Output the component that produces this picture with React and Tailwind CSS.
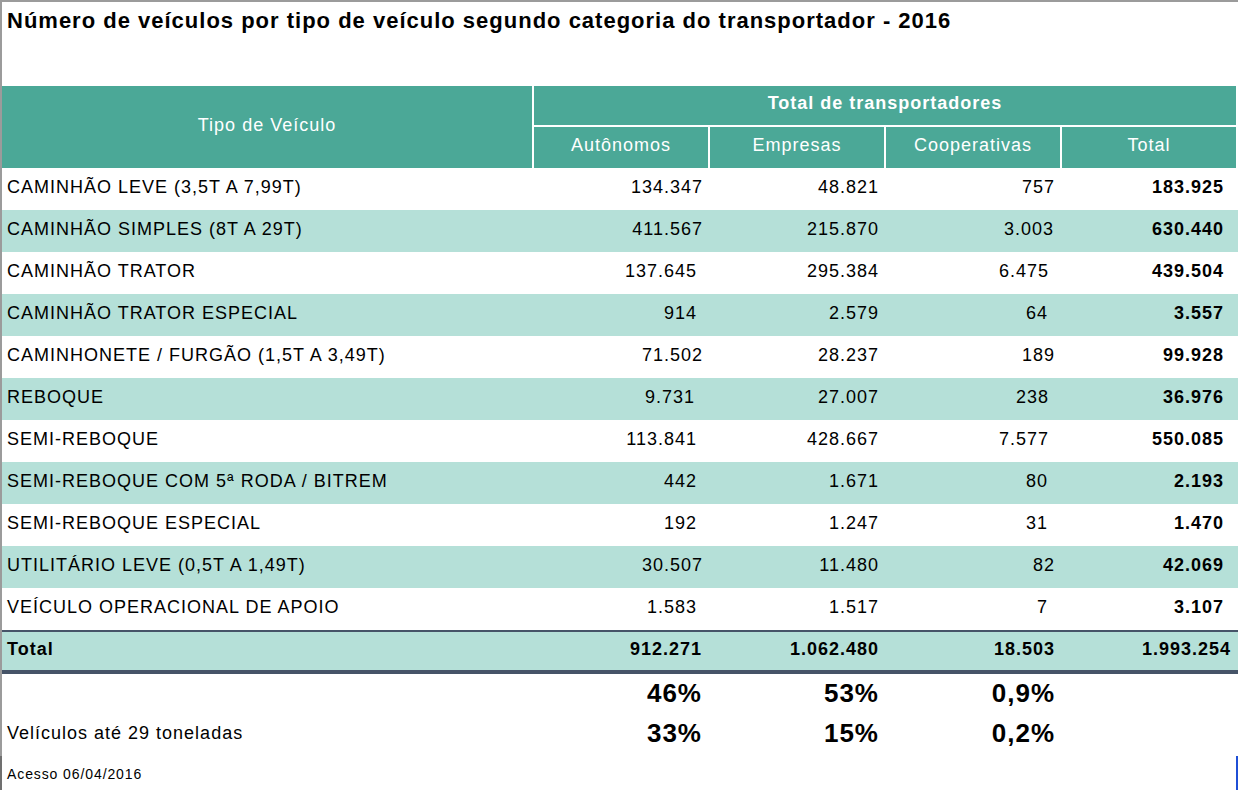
const rows = [
  ['CAMINHÃO LEVE (3,5T A 7,99T)', '134.347', '48.821', '757', '183.925', 'pr-[5px]', 'pr-[5px]'],
  ['CAMINHÃO SIMPLES (8T A 29T)', '411.567', '215.870', '3.003', '630.440', 'pr-[5px]', 'pr-[6px]'],
  ['CAMINHÃO TRATOR', '137.645', '295.384', '6.475', '439.504', 'pr-[11px]', 'pr-[11px]'],
  ['CAMINHÃO TRATOR ESPECIAL', '914', '2.579', '64', '3.557', 'pr-[11px]', 'pr-[12px]'],
  ['CAMINHONETE / FURGÃO (1,5T A 3,49T)', '71.502', '28.237', '189', '99.928', 'pr-[5px]', 'pr-[5px]'],
  ['REBOQUE', '9.731', '27.007', '238', '36.976', 'pr-[13px]', 'pr-[11px]'],
  ['SEMI-REBOQUE', '113.841', '428.667', '7.577', '550.085', 'pr-[11px]', 'pr-[11px]'],
  ['SEMI-REBOQUE COM 5ª RODA / BITREM', '442', '1.671', '80', '2.193', 'pr-[11px]', 'pr-[12px]'],
  ['SEMI-REBOQUE ESPECIAL', '192', '1.247', '31', '1.470', 'pr-[11px]', 'pr-[12px]'],
  ['UTILITÁRIO LEVE (0,5T A 1,49T)', '30.507', '11.480', '82', '42.069', 'pr-[5px]', 'pr-[5px]'],
  ['VEÍCULO OPERACIONAL DE APOIO', '1.583', '1.517', '7', '3.107', 'pr-[11px]', 'pr-[12px]'],
];

const cols = 'grid grid-cols-[530px_174px_174px_174px_174px] gap-x-[2px]';

export default function App() {
  return (
    <div className="relative w-[1238px] h-[790px] bg-white text-black border-t-2 border-[#9b9b9b] flex font-['Liberation_Sans',Arial,sans-serif] tracking-[1px] overflow-hidden">
      <div className="w-[2px] flex flex-col">
        <div className="h-[754px] bg-[#9b9b9b]" />
        <div className="flex-1 bg-[#707070]" />
      </div>

      <div className="flex-1 flex flex-col">
        <div className="h-[84px] pt-[7px] pl-[5px]">
          <h1 className="text-[22px] leading-[24px] font-bold">
            Número de veículos por tipo de veículo segundo categoria do transportador - 2016
          </h1>
        </div>

        {/* header */}
        <div className={`${cols} w-[1234px] text-white text-[18px]`}>
          <div className="row-span-3 bg-[#4ba897] flex items-center justify-center pb-[3px]">Tipo de Veículo</div>
          <div className="col-span-4 h-[39px] bg-[#4ba897] flex items-center justify-center font-bold pb-[4px]">
            Total de transportadores
          </div>
          <div className="col-span-4 h-[2px]" />
          {['Autônomos', 'Empresas', 'Cooperativas', 'Total'].map((h) => (
            <div key={h} className="h-[41px] bg-[#4ba897] flex items-center justify-center pb-[4px]">{h}</div>
          ))}
        </div>

        {/* body */}
        <div className="text-[18px]">
          {rows.map(([name, a, e, c, t, pa, pc], i) => (
            <div key={name} className={`${cols} h-[42px] ${i % 2 ? 'bg-[#b5e0d8]' : 'bg-white'}`}>
              <div className="flex items-center pl-[5px] pb-[4px]">{name}</div>
              <div className={`flex items-center justify-end pb-[4px] ${pa}`}>{a}</div>
              <div className="flex items-center justify-end pb-[4px] pr-[5px]">{e}</div>
              <div className={`flex items-center justify-end pb-[4px] ${pc}`}>{c}</div>
              <div className="flex items-center justify-end pb-[4px] pr-[12px] font-bold">{t}</div>
            </div>
          ))}
          <div className={`${cols} h-[44px] bg-[#b5e0d8] border-t-2 border-b-4 border-[#465468] font-bold`}>
            <div className="flex items-center pl-[5px] pb-[3px]">Total</div>
            <div className="flex items-center justify-end pb-[3px] pr-[6px]">912.271</div>
            <div className="flex items-center justify-end pb-[3px] pr-[5px]">1.062.480</div>
            <div className="flex items-center justify-end pb-[3px] pr-[5px]">18.503</div>
            <div className="flex items-center justify-end pb-[3px] pr-[5px]">1.993.254</div>
          </div>
        </div>

        {/* percentages */}
        <div className={`${cols} h-[36px] text-[26px] font-bold`}>
          <div />
          <div className="flex items-center justify-end pr-[6px]">46%</div>
          <div className="flex items-center justify-end pr-[5px]">53%</div>
          <div className="flex items-center justify-end pr-[5px]">0,9%</div>
          <div />
        </div>
        <div className={`${cols} h-[46px]`}>
          <div className="flex items-center pl-[5px] text-[18px]">Velículos até 29 toneladas</div>
          <div className="flex items-center justify-end pr-[6px] text-[26px] font-bold">33%</div>
          <div className="flex items-center justify-end pr-[5px] text-[26px] font-bold">15%</div>
          <div className="flex items-center justify-end pr-[5px] text-[26px] font-bold">0,2%</div>
          <div />
        </div>
        <div className="flex-1 flex items-center pl-[5px] pt-[2px] text-[14px] tracking-[0.9px]">Acesso 06/04/2016</div>
      </div>

      <div className="absolute right-0 bottom-0 w-[2px] h-[34px] bg-[#1f4fd6]" />
    </div>
  );
}
